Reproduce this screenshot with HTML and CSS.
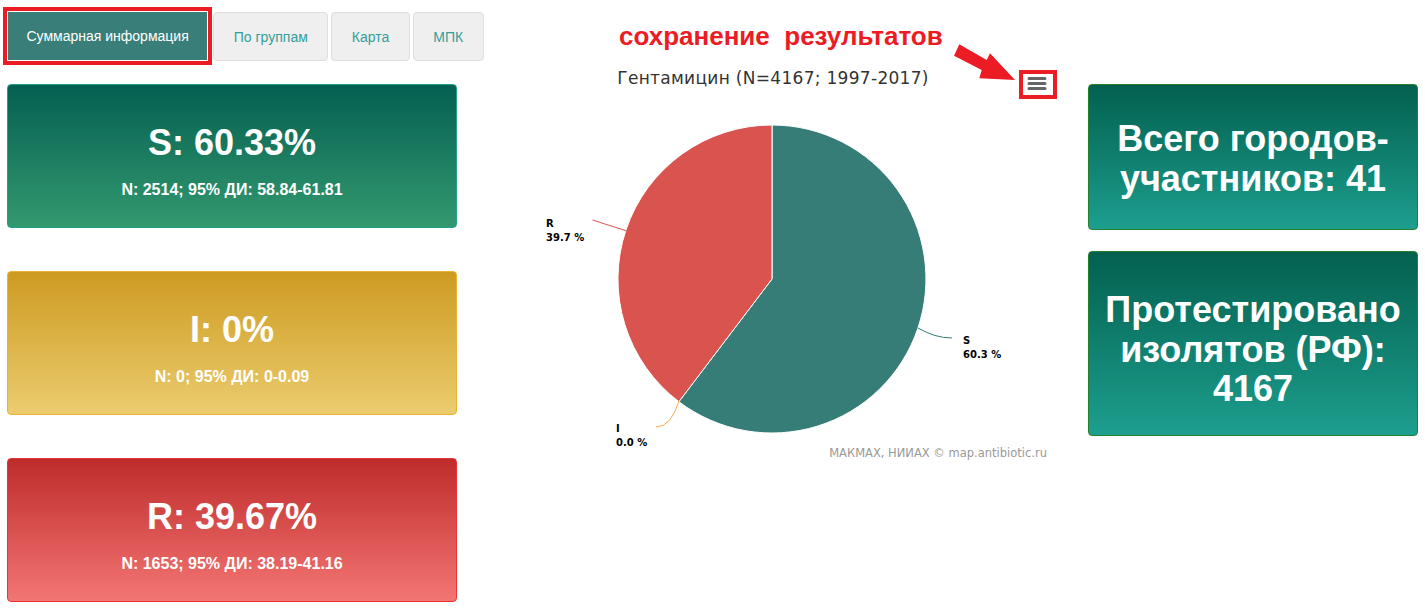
FILE: index.html
```html
<!DOCTYPE html>
<html lang="ru">
<head>
<meta charset="utf-8">
<title>Суммарная информация</title>
<link rel="stylesheet" href="styles.css">
</head>
<body>
<div class="page">
  <nav class="tabs">
    <a class="tab tab-active">Суммарная информация</a>
    <a class="tab">По группам</a>
    <a class="tab">Карта</a>
    <a class="tab">МПК</a>
  </nav>

  <div class="main">
    <section class="col-left">
      <div class="stat stat-s">
        <div class="stat-big">S: 60.33%</div>
        <div class="stat-sub">N: 2514; 95% ДИ: 58.84-61.81</div>
      </div>
      <div class="stat stat-i">
        <div class="stat-big">I: 0%</div>
        <div class="stat-sub">N: 0; 95% ДИ: 0-0.09</div>
      </div>
      <div class="stat stat-r">
        <div class="stat-big">R: 39.67%</div>
        <div class="stat-sub">N: 1653; 95% ДИ: 38.19-41.16</div>
      </div>
    </section>

    <section class="col-chart">
      <svg class="chart" width="631" height="400" viewBox="0 0 631 400">
        <text class="chart-title" x="316" y="23">Гентамицин (N=4167; 1997-2017)</text>
        <rect class="menu-bg" x="564" y="11" width="34" height="25"/>
        <rect class="menu-mark" x="564" y="11" width="34" height="25"/>
        <path class="menu-lines" d="M572 17.5H588M572 22.5H588M572 27.5H588"/>
        <path class="slice slice-s" d="M315 218 L315 64 A154 154 0 1 1 221.9 340.7 Z"/>
        <path class="slice slice-r" d="M315 218 L221.9 340.7 A154 154 0 0 1 315 64 Z"/>
        <path class="conn conn-r" d="M135.5 159 L169 169.7"/>
        <path class="conn conn-s" d="M461 267 Q478 277 495 277"/>
        <path class="conn conn-i" d="M222 340 Q214 366 199 366"/>
        <text class="dl" x="89" y="165.5">R<tspan x="89" y="179.5">39.7 %</tspan></text>
        <text class="dl" x="506" y="283">S<tspan x="506" y="296.5">60.3 %</tspan></text>
        <text class="dl" x="159" y="370.5">I<tspan x="159" y="385">0.0 %</tspan></text>
        <text class="credits" x="590" y="396">МАКМАХ, НИИАХ © map.antibiotic.ru</text>
      </svg>
    </section>

    <section class="col-right">
      <div class="info info-cities">Всего городов-<br>участников: 41</div>
      <div class="info info-isolates">Протестировано изолятов (РФ): 4167</div>
    </section>
  </div>

  <div class="note">сохранение&nbsp; результатов</div>
  <svg class="note-arrow" width="70" height="45" viewBox="950 40 70 45">
    <polygon points="959.3,44.3 986.7,60 990,53.3 1015,80 979.3,78.3 981.7,70 954,55.7"/>
  </svg>
</div>
</body>
</html>
```

FILE: styles.css
```css
* { box-sizing: border-box; }

html, body {
  margin: 0;
  padding: 0;
  background: #fff;
}

body {
  font-family: "Liberation Sans", Arial, sans-serif;
  color: #333;
}

.page {
  position: relative;
  width: 1425px;
  height: 616px;
  overflow: hidden;
}

/* Tabs */
.tabs {
  display: flex;
  padding: 12px 0 0 8px;
  height: 61px;
}

.tab {
  display: block;
  height: 49px;
  line-height: 48px;
  padding: 0 19.5px;
  margin-right: 3px;
  font-size: 14px;
  color: #339e9b;
  background: #efefef;
  border: 1px solid #dedede;
  border-radius: 4px;
  white-space: nowrap;
}

.tab-active {
  color: #fff;
  background: #397e78;
  border-color: #397e78;
  padding: 0 17.5px;
  margin-right: 6px;
  height: 48px;
  line-height: 47px;
  outline: 4px solid #ec1c24;
  outline-offset: 1px;
  border-radius: 0;
}

/* Main row */
.main {
  display: flex;
  align-items: flex-start;
}

.col-left {
  display: flex;
  flex-direction: column;
  gap: 43px;
  width: 450px;
  margin-left: 7px;
  padding-top: 23px;
}

.col-chart {
  width: 631px;
}

.col-right {
  display: flex;
  flex-direction: column;
  gap: 21px;
  width: 330px;
  padding-top: 23px;
}

/* Left stat cards */
.stat {
  height: 144px;
  padding-top: 38px;
  border: 1px solid;
  border-radius: 4px;
  text-align: center;
  color: #fff;
  font-weight: bold;
}

.stat-big {
  font-size: 36px;
  line-height: 40px;
  margin-bottom: 17px;
}

.stat-sub {
  font-size: 16px;
  line-height: 20px;
}

.stat-s {
  background: linear-gradient(to bottom, #045f51, #33996f);
  border-color: #21a08a;
}

.stat-i {
  background: linear-gradient(to bottom, #cd9b22, #ebcc6e);
  border-color: #e9b432;
}

.stat-r {
  background: linear-gradient(to bottom, #be2c2b, #f37674);
  border-color: #eb3232;
}

/* Right info cards */
.info {
  border: 1px solid #24802f;
  border-radius: 4px;
  background: linear-gradient(to bottom, #03604f, #1d9e8e);
  color: #fff;
  font-weight: bold;
  font-size: 36px;
  line-height: 1.1;
  text-align: center;
  padding: 0 12px;
}

.info-cities {
  height: 146px;
  padding-top: 34px;
}

.info-isolates {
  height: 185px;
  padding-top: 38px;
}

/* Chart */
.chart {
  display: block;
  font-family: "DejaVu Sans", Verdana, sans-serif;
}

.chart-title {
  font-size: 17px;
  letter-spacing: 0.3px;
  fill: #333;
  text-anchor: middle;
}

.menu-bg { fill: #fff; }

.menu-mark {
  fill: none;
  stroke: #ec1c24;
  stroke-width: 4;
}

.menu-lines {
  fill: none;
  stroke: #666;
  stroke-width: 3;
  stroke-linecap: round;
}

.slice {
  stroke: #fff;
  stroke-width: 1;
  stroke-linejoin: round;
}

.slice-s { fill: #377d77; }
.slice-r { fill: #d9534f; }

.conn {
  fill: none;
  stroke-width: 1;
}

.conn-r { stroke: #d9534f; }
.conn-s { stroke: #377d77; }
.conn-i { stroke: #f0ad4e; }

.dl {
  font-size: 10px;
  font-weight: bold;
  fill: #000;
}

.credits {
  font-size: 11.5px;
  fill: #999;
  text-anchor: end;
}

/* Annotation overlay */
.note {
  position: absolute;
  left: 619px;
  top: 21px;
  font-family: "Liberation Sans", Arial, sans-serif;
  font-weight: bold;
  font-size: 26px;
  line-height: 30px;
  color: #ec1c24;
  white-space: nowrap;
}

.note-arrow {
  position: absolute;
  left: 950px;
  top: 40px;
}

.note-arrow polygon { fill: #ec1c24; }
```
